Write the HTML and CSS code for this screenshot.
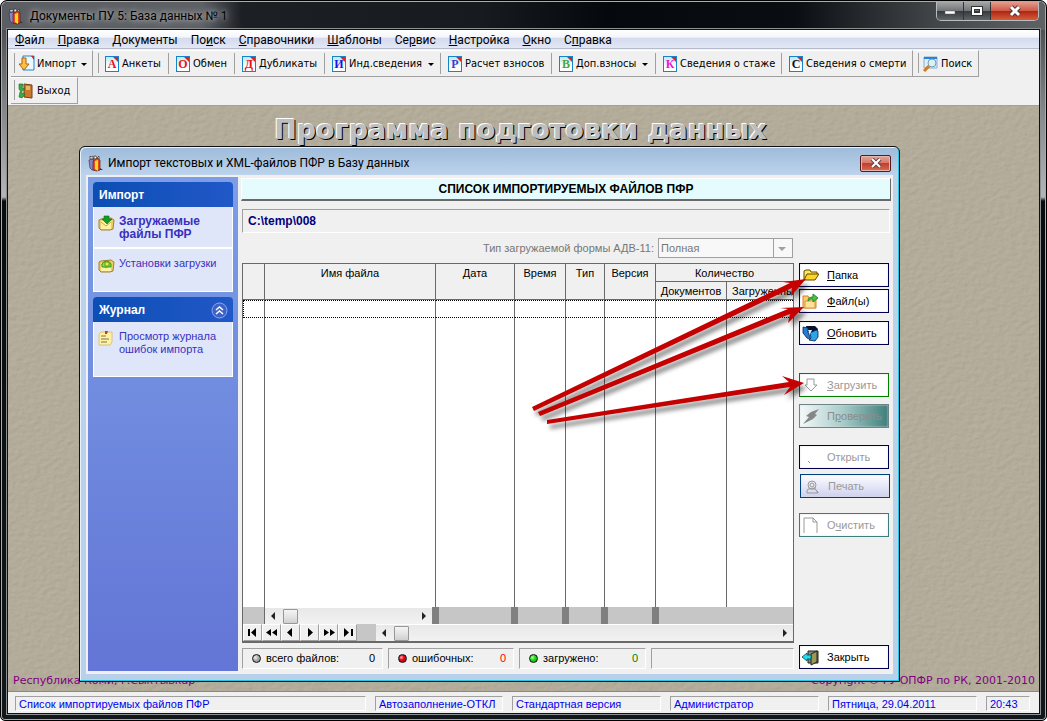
FILE: index.html
```html
<!DOCTYPE html>
<html lang="ru">
<head>
<meta charset="utf-8">
<title>Документы ПУ 5: База данных № 1</title>
<link rel="stylesheet" href="styles.css">
</head>
<body>
<svg class="defs" width="0" height="0" aria-hidden="true">
  <defs>
    <symbol id="people" viewBox="0 0 16 18"><path d="M2 2l1 1 2-1v3h1V2h2l1 2 2-2v3H2z" fill="#f4eaea" stroke="#333" stroke-width=".7"/><path d="M1 6l4-1 2 3v8H4L2 14z" fill="#8a86c2" stroke="#33306a" stroke-width=".7"/><path d="M5 7l4-3 3 2v10l-3 1-4-1z" fill="#e8491f" stroke="#542011" stroke-width=".7"/><path d="M7 7l3-1v11l-3-2z" fill="#ffd91c"/><path d="M12 14l3 2h-3z" fill="#333"/></symbol>
    <symbol id="folder-green" viewBox="0 0 17 16"><path d="M1 5l2-1 10-1 3 2-1 9-3 1H3l-2-2z" fill="#e9cf65" stroke="#a6812b"/><path d="M3 6h10v8H3z" fill="#fff1a5"/><path d="M3 7l5 4 5-4" fill="none" stroke="#d5a93e"/></symbol>
  </defs>
</svg>
<div class="window">
  <header class="titlebar">
    <svg class="app-icon"><use href="#people"/></svg>
    <h1 class="title">Документы ПУ 5: База данных № 1</h1>
    <div class="caption">
      <button class="cap" aria-label="Свернуть"><svg width="12" height="12"><path d="M1 6h10v3H1z" fill="#fff" stroke="#555" stroke-width=".5"/></svg></button>
      <button class="cap" aria-label="Развернуть"><svg width="12" height="12"><path d="M2 3h8v6H2z" fill="none" stroke="#333" stroke-width="4"/><path d="M2 3h8v6H2z" fill="none" stroke="#fff" stroke-width="2"/></svg></button>
      <button class="cap cap-close" aria-label="Закрыть окно"><svg width="12" height="12"><path d="M2 2l8 8M10 2l-8 8" stroke="#533" stroke-width="5"/><path d="M2 2l8 8M10 2l-8 8" stroke="#fff" stroke-width="3"/></svg></button>
    </div>
  </header>
  <div class="client">
    <nav class="menu">
      <a href="#"><u>Ф</u>айл</a><a href="#"><u>П</u>равка</a><a href="#"><u>Д</u>окументы</a><a href="#">По<u>и</u>ск</a><a href="#"><u>С</u>правочники</a><a href="#"><u>Ш</u>аблоны</a><a href="#">Се<u>р</u>вис</a><a href="#"><u>Н</u>астройка</a><a href="#"><u>О</u>кно</a><a href="#">С<u>п</u>равка</a>
    </nav>
    <div class="toolbar">
      <div class="band band-import"><button class="tool"><svg width="17" height="17"><path d="M5 1h11v14H5z" fill="#e9f7ff" stroke="#2785cc"/><path d="M13 1h3v4z" fill="#d22"/><path d="M4 3h4v6h3l-5 6-5-6h3z" fill="#ffbf43" stroke="#a56713"/></svg>Импорт<i class="drop"></i></button></div>
      <div class="band band-docs">
        <button class="tool"><b class="doc red">А</b>Анкеты</button>
        <button class="tool"><b class="doc red">О</b>Обмен</button>
        <button class="tool"><b class="doc red">Д</b>Дубликаты</button>
        <button class="tool"><b class="doc blue">И</b>Инд.сведения<i class="drop"></i></button>
        <button class="tool"><b class="doc indigo">Р</b>Расчет взносов</button>
        <button class="tool"><b class="doc green">В</b>Доп.взносы<i class="drop"></i></button>
        <button class="tool"><b class="doc pink">К</b>Сведения о стаже</button>
        <button class="tool"><b class="doc black">С</b>Сведения о смерти</button>
      </div>
      <div class="band band-find"><button class="tool"><svg width="16" height="16"><path d="M1 1h13v11H1z" fill="#dceffd" stroke="#87afd0"/><path d="M1 1h13v2H1z" fill="#2584d9"/><circle cx="9" cy="7" r="4" fill="#d8f1fb" stroke="#739dad"/><path d="M6 10l-5 5" stroke="#db7619" stroke-width="3"/></svg>Поиск</button></div>
      <div class="band band-exit"><button class="tool"><svg width="17" height="16"><path d="M6 1l8 1v13l-8-1z" fill="#ca792c" stroke="#743d16"/><path d="M8 3h4v4H8z" fill="#edb55d"/><path d="M1 1h4l-1 4 3 1-4 3-2-3zM2 9l5 2-3 4-3-1z" fill="#3aac3c" stroke="#17662b" stroke-width=".6"/></svg>Выход</button></div>
    </div>
    <main class="desktop">
      <svg class="texture" aria-hidden="true"><filter id="sand" x="0" y="0" width="100%" height="100%"><feTurbulence type="fractalNoise" baseFrequency=".16 .24" numOctaves="3" seed="4"/><feDiffuseLighting surfaceScale=".45" lighting-color="#bdb6a3"><feDistantLight azimuth="225" elevation="62"/></feDiffuseLighting></filter><rect width="100%" height="100%" filter="url(#sand)"/></svg>
      <p class="banner">Программа подготовки данных</p>
      <footer class="credits"><span>Республика Коми, г.Сыктывкар</span><span>Copyright © ГУ ОПФР по РК, 2001-2010</span></footer>

      <section class="dialog" aria-label="Импорт">
        <header class="dialog-title">
          <svg class="app-icon"><use href="#people"/></svg>
          <h2 class="dialog-name">Импорт текстовых и XML-файлов ПФР в Базу данных</h2>
          <button class="dialog-close" aria-label="Закрыть"><svg width="12" height="10"><path d="M2 1l8 8M10 1l-8 8" stroke="#644" stroke-width="4"/><path d="M2 1l8 8M10 1l-8 8" stroke="#fff" stroke-width="2"/></svg></button>
        </header>
        <div class="dialog-body">
          <aside class="side">
            <div class="group">
              <h3 class="group-head">Импорт</h3>
              <a class="task active" href="#"><svg class="task-icon"><use href="#folder-green"/><path d="M6 1h5v3h3l-5 5-5-5h2z" fill="#159b26" stroke="#08701a" stroke-width=".6"/></svg><span>Загружаемые файлы ПФР</span></a>
              <a class="task second" href="#"><svg class="task-icon"><use href="#folder-green"/><path d="M4 7a5 5 0 0 1 9 0v3H4z" fill="#9cdc41" stroke="#399322"/><path d="M7 5h4v4H7z" fill="#e8ef39" stroke="#48a42a"/></svg><span>Установки загрузки</span></a>
            </div>
            <div class="group">
              <h3 class="group-head">Журнал<svg width="17" height="17"><circle cx="8.500" cy="8.500" r="7.500" fill="#3e62c8" stroke="#8ca9e8"/><path d="M5 8l3.500-3L12 8M5 12l3.500-3 3.500 3" fill="none" stroke="#fff" stroke-width="1.500"/></svg></h3>
              <a class="task log" href="#"><svg class="task-icon"><path d="M3 2h11v10l-2 3H1V4z" fill="#fff2a0" stroke="#d9c27c"/><path d="M3 6h5M3 9h8M3 12h6" stroke="#7c775a"/><path d="M7 1h3l-1 3H7z" fill="#d83228"/></svg><span>Просмотр журнала ошибок импорта</span></a>
            </div>
          </aside>
          <div class="content">
            <h3 class="heading">СПИСОК ИМПОРТИРУЕМЫХ ФАЙЛОВ ПФР</h3>
            <div class="path">C:\temp\008</div>
            <div class="work">
              <div class="left">
                <div class="form"><label for="form-type">Тип загружаемой формы АДВ-11:</label><select id="form-type" disabled><option>Полная</option></select></div>
                <div class="grid">
                  <table class="files">
                    <colgroup><col class="c-mark"><col class="c-name"><col class="c-date"><col class="c-time"><col class="c-type"><col class="c-ver"><col class="c-doc"><col></colgroup>
                    <thead>
                      <tr><th rowspan="2"></th><th rowspan="2">Имя файла</th><th rowspan="2">Дата</th><th rowspan="2">Время</th><th rowspan="2">Тип</th><th rowspan="2">Версия</th><th colspan="2">Количество</th></tr>
                      <tr><th>Документов</th><th class="cut">Загруженны</th></tr>
                    </thead>
                    <tbody>
                      <tr class="current"><td></td><td></td><td></td><td></td><td></td><td></td><td></td><td></td></tr>
                      <tr><td></td><td></td><td></td><td></td><td></td><td></td><td></td><td></td></tr>
                    </tbody>
                  </table>
                  <div class="strip"><span></span><div class="scroll"><i class="arr prev"></i><i class="thumb"></i><i class="arr next"></i></div><span class="stop"></span><span class="stop"></span><span class="stop"></span><span class="stop"></span><span class="stop"></span></div>
                  <div class="navigator">
                    <button class="nav" aria-label="Первая"><svg><path d="M5 3v7" stroke="#000" stroke-width="2"/><path d="M12 2v9L7 6.500z"/></svg></button>
                    <button class="nav" aria-label="Назад на страницу"><svg><path d="M8 3v7L3 6.500zM14 3v7L9 6.500z"/></svg></button>
                    <button class="nav" aria-label="Назад"><svg><path d="M10 2v9L5 6.500z"/></svg></button>
                    <button class="nav" aria-label="Вперед"><svg><path d="M7 2v9l5-4.500z"/></svg></button>
                    <button class="nav" aria-label="Вперед на страницу"><svg><path d="M4 3v7l5-3.500zM10 3v7l5-3.500z"/></svg></button>
                    <button class="nav" aria-label="Последняя"><svg><path d="M13 3v7" stroke="#000" stroke-width="2"/><path d="M5 2v9l5-4.500z"/></svg></button>
                    <span class="filler"></span>
                    <div class="scroll"><i class="arr prev"></i><i class="thumb"></i><i class="arr next"></i></div>
                  </div>
                </div>
                <div class="totals">
                  <div class="total"><i class="led"></i>всего файлов:<output>0</output></div>
                  <div class="total"><i class="led led-red"></i>ошибочных:<output class="n-red">0</output></div>
                  <div class="total"><i class="led led-green"></i>загружено:<output class="n-green">0</output></div>
                  <div class="total"></div>
                </div>
              </div>
              <div class="actions">
                <button class="act"><svg><path d="M2 13V4l2-1h4l1 2h6v3" fill="#ffe668" stroke="#604700"/><path d="M2 13l3-6h12l-4 6z" fill="#ffd52b" stroke="#604700"/></svg><span><u>П</u>апка</span></button>
                <button class="act"><svg><path d="M1 3h5l1 2h7v10H1z" fill="#ffc965" stroke="#c98332"/><path d="M3 8h10v7H3z" fill="#ffe19a" stroke="#d79646"/><path d="M6 8c0-3 2-4 5-4V1l5 4-5 4V6C9 6 8 6 6 8z" fill="#4bc43f" stroke="#238b31"/></svg><span><u>Ф</u>айл(ы)</span></button>
                <button class="act act-refresh"><svg><path d="M4 1h9l3 3-1 3H5z" fill="#06122e"/><path d="M1 2l5 1v4l3 8-4-2-4-5z" fill="#1f7fd6" stroke="#04204d" stroke-width=".8"/><path d="M8 8l6-3 2 1v6l-3 4-6-1 2-2z" fill="#2da5ed" stroke="#04204d" stroke-width=".8"/><path d="M6 5h4l-2 4z" fill="#dff4ff"/></svg><span><u>О</u>бновить</span></button>
                <button class="act act-load" disabled><svg><path d="M5 2h7v6h3l-6 6-6-6h2z" fill="#fff" stroke="#999"/></svg><span><u>З</u>агрузить</span></button>
                <button class="act act-check" disabled><svg><path d="M17 1L9 4 4 8l3 1-6 7 10-5 4-4-2-1z" fill="#878787"/></svg><span>П<u>р</u>оверить</span></button>
                <button class="act act-open" disabled><svg><path d="M6 12l2 2" stroke="#999"/></svg><span>Открыть</span></button>
                <button class="act act-print" disabled><svg><circle cx="9" cy="7" r="4" fill="none" stroke="#999"/><circle cx="9" cy="7" r="2" fill="none" stroke="#999"/><path d="M5 11h7l3 3v1H4v-2zM11 9l4 6" fill="none" stroke="#999"/></svg><span>Печать</span></button>
                <button class="act act-clear" disabled><svg><path d="M2 1h9l4 4v11M2 1v15M11 1v4h4" fill="none" stroke="#999"/></svg><span>О<u>ч</u>истить</span></button>
                <button class="act act-close"><svg><path d="M6 2h10v12H6z" fill="#888" stroke="#222"/><path d="M9 5l6-3v11l-6 3z" fill="#9b9852" stroke="#222"/><path d="M0 8l5-4v2h4v4H5v2z" fill="#23dce8" stroke="#064a59" stroke-width=".8"/></svg><span>Закрыть</span></button>
              </div>
            </div>
          </div>
        </div>
        <svg class="pointers" aria-hidden="true" viewBox="79 146 821 536">
          <g class="pointer-shape">
            <path d="M532 407L790 283 783 282 806 279 791 296 792 288 534 411z"/>
            <path d="M538 412L788 309 780 308 804 307 788 323 790 314 540 416z"/>
            <path d="M547 420L789 382 782 376 804 383 784 395 790 387 547 424z"/>
          </g>
        </svg>
      </section>
    </main>
    <footer class="status"><span>Список импортируемых файлов ПФР</span><span>Автозаполнение-ОТКЛ</span><span>Стандартная версия</span><span>Администратор</span><span>Пятница, 29.04.2011</span><span>20:43</span></footer>
  </div>
</div>
</body>
</html>
```

FILE: styles.css
```css
* { box-sizing: border-box; }
body {
  margin: 0;
  height: 100vh;
  background: #fff;
  color: #000;
  font: 11px/13px "Liberation Sans", Arial, sans-serif;
}
h1, h2, h3, p { margin: 0; font-size: inherit; font-weight: inherit; }
button { margin: 0; padding: 0; border: 0; background: none; color: inherit; font: inherit; }
a { color: inherit; text-decoration: none; }
i { font-style: normal; }
svg { flex: none; }
.defs { position: absolute; }

/* Main window frame */
.window {
  height: 100%;
  display: flex;
  flex-direction: column;
  padding: 0 7px 7px;
  border: 1px solid #000;
  border-radius: 7px 7px 5px 5px;
  background: linear-gradient(#4d5054 28px, #85878a 110px, #b5b5b8 196px, #090c0e 200px, #11171a);
  box-shadow: inset 0 0 0 1px #a9adb0;
}
.titlebar {
  flex: none;
  display: flex;
  align-items: center;
  height: 28px;
  margin: 1px -6px 0;
  padding-left: 6px;
  border-radius: 6px 6px 0 0;
  background: linear-gradient(90deg, #5b5e62, #5d6064 200px, #1c2025 240px, #171a1f 46%, #05090d 58%, #0a0e12 76%, #45484b 90%, #606366);
}
.app-icon { width: 16px; height: 18px; }
.title {
  margin-left: 6px;
  font: 12px/16px Roboto, "Noto Sans", sans-serif;
  text-shadow: 0 0 4px #b4b5b7, 0 0 8px #a0a2a5, 0 0 12px #8d9093;
}
.caption { display: flex; align-self: flex-start; margin: 0 6px 0 auto; border: 1px solid #b9bcbe; border-top: 0; border-radius: 0 0 5px 5px; overflow: hidden; }
.cap { display: grid; place-items: center; width: 27px; height: 18px; border-right: 1px solid #333; background: linear-gradient(#a3a5a7, #737679 48%, #36393c 50%, #606467); }
.cap-close { width: 47px; border: 0; background: linear-gradient(#e59b8d, #cf5b48 48%, #ac2413 50%, #d65d39); }
.client {
  flex: 1;
  min-height: 0;
  display: flex;
  flex-direction: column;
  background: #f0f0f0;
  box-shadow: 0 0 0 1px #111, 0 0 0 2px #8d9093;
}

/* Menu and toolbar */
.menu {
  flex: none;
  display: flex;
  gap: 13px;
  height: 19px;
  padding: 1px 7px 0;
  border-bottom: 1px solid #b6bccc;
  background: linear-gradient(#fff, #f4f6fb 40%, #d5dbed 45%, #e2e7f5);
  font: 12px/18px Roboto, "Noto Sans", sans-serif;
}
.toolbar { flex: none; display: flex; flex-wrap: wrap; align-content: flex-start; height: 57px; padding: 1px 0 0 3px; border-bottom: 1px solid #a0a0a0; font: 11px/13px "DejaVu Sans Condensed", "DejaVu Sans", sans-serif; }
.band { display: grid; height: 27px; padding: 2px 0 2px 5px; border-right: 1px solid #a0a0a0; border-bottom: 1px solid #a0a0a0; border-top: 1px solid #fff; background: linear-gradient(#a0a0a0, #a0a0a0) 3px 2px / 1px 20px no-repeat; }
.band-import { width: 82px; }
.band-docs { width: 820px; grid-template-columns: 71px 66px 90px 116px 111px 104px 126px 1fr; background-position: 5px 2px; }
.band-find { width: 66px; padding-left: 10px; background-position: 5px 2px; }
.band-exit { width: 67px; }
.tool { display: flex; align-items: center; gap: 2px; padding-left: 2px; border-right: 1px solid #a0a0a0; white-space: nowrap; }
.band-docs .tool { gap: 3px; padding-left: 7px; }
.band .tool:last-child { border-right: 0; }
.band-find .tool { padding: 0; }
.drop { margin: 1px 0 0 3px; border: 3px solid transparent; border-top-color: #000; border-bottom: 0; }
.doc { flex: none; width: 14px; height: 16px; border: 1px solid #1684c6; background: linear-gradient(225deg, #d7281f 3px, transparent 4px), linear-gradient(#bfe8fb, #fff 70%); font: bold 12px/15px "Liberation Serif", serif; text-align: center; }
.red { color: #f01010; }
.blue { color: #1414e6; }
.indigo { color: #3c3ccd; }
.green { color: #4ba63c; }
.pink { color: #f012d8; }
.black { color: #111; }

/* Desktop */
.desktop { position: relative; flex: 1; min-height: 0; overflow: hidden; background: #b0a894; }
.texture { position: absolute; inset: 0; width: 100%; height: 100%; }
.banner { position: relative; padding: 8px 6px 0 0; color: #bebebe; font: bold 27px/32px "DejaVu Sans", sans-serif; text-align: center; text-shadow: -1px -1px #fff, 1px 1px #000; }
.credits { position: absolute; inset: auto 4px 2px 5px; display: flex; justify-content: space-between; color: #800080; font: 11px/16px "DejaVu Sans", sans-serif; }

/* Import dialog */
.dialog {
  position: absolute;
  inset: 40px 139px 9px 71px;
  display: flex;
  flex-direction: column;
  padding: 0 6px 7px;
  border: 1px solid #111;
  border-radius: 6px 6px 0 0;
  background: linear-gradient(#9ebbda, #bdd3ec 28px, #b8d0ea);
  box-shadow: inset -1px -1px #22c8e4, inset 1px 1px #e7f1fb;
}
.dialog-title { flex: none; display: flex; align-items: center; height: 28px; padding: 4px 2px 0; }
.dialog-name { margin-left: 4px; font: 12px/16px Roboto, "Noto Sans", sans-serif; }
.dialog-close { display: grid; place-items: center; width: 31px; height: 17px; margin-left: auto; border: 1px solid #521d20; border-radius: 2px; background: linear-gradient(#e4a397, #d77767 48%, #c1402f 50%, #d46c52); box-shadow: inset 0 0 0 1px #e7b7ae; }
.dialog-body { flex: 1; min-height: 0; display: flex; gap: 3px; padding: 2px 2px 3px; background: #f0f0f0; }
.side { flex: none; width: 150px; display: flex; flex-direction: column; gap: 5px; padding: 5px; background: linear-gradient(#7b9ee6, #6375d6); }
.group-head { display: flex; align-items: center; justify-content: space-between; height: 25px; padding: 2px 5px 0 6px; border-radius: 4px 4px 0 0; background: linear-gradient(90deg, #0c4eb4, #2158c8); color: #fff; font-weight: bold; font-size: 12px; }
.task { display: flex; gap: 4px; padding: 8px 4px; border: 1px solid #fff; border-top: 0; background: #dfe6f9; color: #3a30c0; }
.task.active { height: 42px; border-bottom-width: 2px; font-weight: bold; font-size: 12px; }
.task.second { height: 43px; }
.task.log { height: 55px; }
.task-icon { width: 17px; height: 16px; }
.content { flex: 1; min-width: 0; display: flex; flex-direction: column; padding-bottom: 2px; }
.heading { flex: none; height: 23px; margin-top: 1px; border: 1px solid #fff; border-bottom: 2px solid #696969; border-right: 1px solid #696969; background: #e4fcfe; font-weight: bold; font-size: 12px; line-height: 21px; text-align: center; }
.path { flex: none; height: 24px; margin: 8px 1px 0; padding: 0 5px; border: 1px solid #a0a0a0; border-right-color: #fff; border-bottom-color: #fff; color: #000080; font-weight: bold; font-size: 12px; line-height: 22px; }
.work { flex: 1; min-height: 0; display: flex; gap: 5px; padding: 4px 2px 0 1px; }
.left { flex: 1; min-width: 0; display: flex; flex-direction: column; }
.form { position: relative; display: flex; justify-content: flex-end; align-items: center; gap: 4px; margin: 1px 1px 5px 0; color: #777; }
.form select { appearance: none; width: 135px; height: 20px; margin: 0; padding: 0 2px; border: 1px solid #a0a0a0; border-radius: 0; background: linear-gradient(#a0a0a0, #a0a0a0) 114px 0 / 1px 18px no-repeat, #f8f8f8; color: #777; font: inherit; opacity: 1; }
.form::after { content: ""; position: absolute; right: 7px; top: 9px; border: 4px solid transparent; border-top-color: #a0a0a0; border-bottom: 0; }

.grid { flex: 1; min-height: 0; display: flex; flex-direction: column; border: 1px solid #696969; border-bottom-width: 2px; background: #fff; }
.files { flex: 1; width: 100%; height: 200px; table-layout: fixed; border-spacing: 0; }
.c-mark { width: 22px; }
.c-name { width: 171px; }
.c-date { width: 79px; }
.c-time, .c-ver { width: 51px; }
.c-type { width: 39px; }
.c-doc { width: 71px; }
.files th { height: 18px; padding: 2px 0 0; border-right: 1px solid #696969; border-bottom: 1px solid #696969; background: #f0f0f0; font-weight: normal; line-height: 14px; vertical-align: top; white-space: nowrap; overflow: hidden; }
.files .cut { padding-left: 5px; text-align: left; }
.files td { padding: 0; border-right: 1px solid #696969; }
.files th:last-child, .files td:last-child { border-right: 0; }
.current td { height: 18px; border-top: 1px dotted #000; border-bottom: 1px dotted #000; }
.current td:first-child { border-left: 1px dotted #000; }
.strip { flex: none; display: grid; grid-template-columns: 22px 167px 79px 51px 39px 51px 1fr; height: 17px; background: #c6c6c6; }
.strip > span:first-child { border-right: 1px solid #696969; }
.stop { border-left: 7px solid #808080; }
.scroll { display: flex; align-items: center; min-width: 0; height: 17px; padding: 0 6px; border-top: 1px solid #fff; background: linear-gradient(#e8e8e8, #f2f2f2); }
.arr { border: 4px solid transparent; }
.prev { margin-right: 4px; border-right-color: #222; border-left: 0; }
.next { margin-left: auto; border-left-color: #222; border-right: 0; }
.thumb { width: 15px; height: 15px; margin-left: 4px; border: 1px solid #979797; border-radius: 1px; background: linear-gradient(#f4f4f4, #e4e4e4 50%, #cfcfcf); }
.navigator { flex: none; display: flex; height: 17px; background: #c6c6c6; }
.nav { width: 19px; border: 1px solid #fff; border-right-color: #a0a0a0; border-bottom-color: #a0a0a0; background: #f0f0f0; }
.nav svg { display: block; width: 17px; height: 14px; }
.filler { width: 19px; }
.navigator .scroll { flex: 1; }
.totals { flex: none; display: grid; grid-template-columns: 141px 126px 127px 1fr; gap: 5px; margin-top: 5px; }
.total { display: flex; align-items: center; gap: 5px; height: 21px; padding: 0 7px 0 9px; border: 1px solid #a0a0a0; border-right-color: #fff; border-bottom-color: #fff; }
.total output { margin-left: auto; }
.led { width: 9px; height: 9px; border: 1px solid #111; border-radius: 5px; background: radial-gradient(circle at 35% 35%, #eee, #aaa 45%, #888); }
.led-red { background: radial-gradient(circle at 35% 35%, #fba, #e00018 40%, #c00018); }
.led-green { background: radial-gradient(circle at 35% 35%, #bfffa8, #1bdd17 40%, #0dad12); }
.n-red { color: #f00; }
.n-green { color: #008000; }

.actions { flex: none; display: flex; flex-direction: column; width: 90px; padding-top: 26px; }
.act { flex: none; display: flex; align-items: center; gap: 8px; height: 24px; margin-bottom: 2px; padding: 0 2px; border: 1px solid #00004f; background: #fff; box-shadow: inset 0 0 2px #ddd; text-align: left; }
.act svg { width: 17px; height: 17px; }
.act-refresh { margin-top: 6px; }
.act-load { margin-top: 26px; border-color: #008000; }
.act-check { margin-top: 5px; border-color: #6f8585; background: linear-gradient(90deg, #f4fafa, #a5cac7 50%, #3e7f7b); }
.act-open { margin-top: 15px; }
.act-print { margin-top: 3px; margin-left: 1px; margin-right: -1px; border-color: #004080; background: linear-gradient(#fdfdff, #cfd1ef); }
.act-clear { margin-top: 13px; border-color: #3c7d7d; }
.act:disabled { color: #999; }
.act-check:disabled { color: #8c8c8c; }
.act-close { margin-top: auto; margin-bottom: 0; }

.pointers { position: absolute; top: -1px; left: -1px; width: 821px; height: 536px; pointer-events: none; }
.pointer-shape { fill: #c40000; filter: drop-shadow(3px 5px 2px rgba(0, 0, 0, .45)); }

/* Status bar */
.status { flex: none; display: grid; grid-template-columns: 1fr 128px 149px 149px 149px 44px; gap: 9px; height: 22px; padding: 4px 9px 2px 7px; border-top: 1px solid #888; color: #0000f0; line-height: 15px; }
.status span { padding-left: 3px; border: 1px solid #a0a0a0; border-right-color: #fff; border-bottom-color: #fff; white-space: nowrap; overflow: hidden; }
```
